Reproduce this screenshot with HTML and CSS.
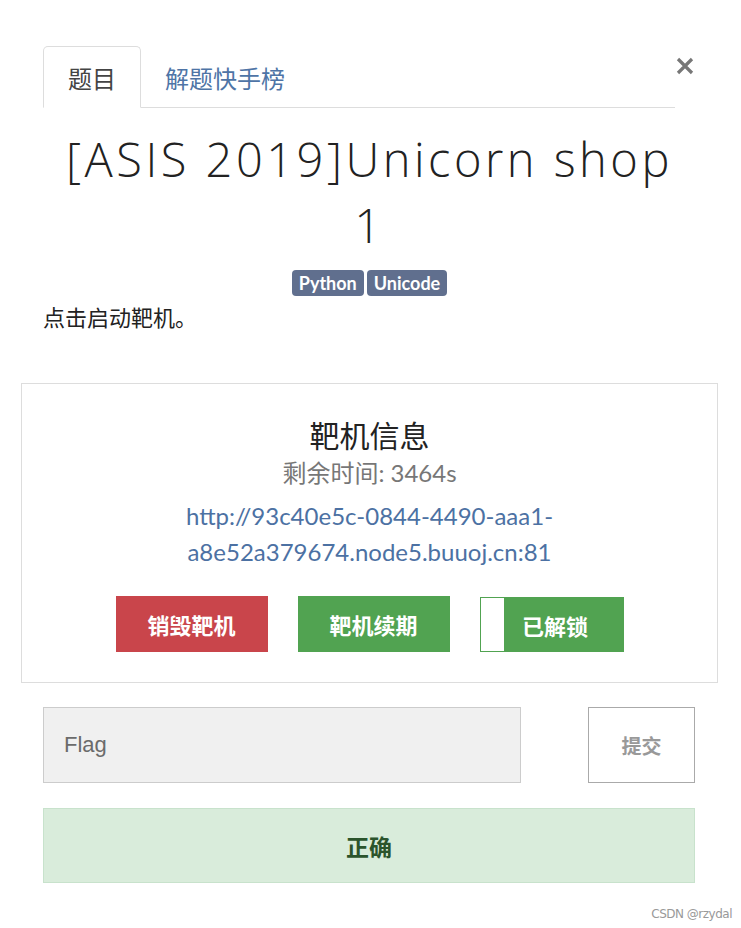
FILE: index.html
```html
<!DOCTYPE html>
<html lang="zh">
<head>
<meta charset="utf-8">
<title>[ASIS 2019]Unicorn shop 1</title>
<link rel="stylesheet" href="styles.css">
</head>
<body>
<div class="modal">
  <div class="head">
    <ul class="tabs">
      <li class="tab active">题目</li>
      <li class="tab link">解题快手榜</li>
    </ul>
    <button class="close" aria-label="close">
      <svg width="18" height="18" viewBox="0 0 18 18"><path d="M2 2 L16 16 M16 2 L2 16" stroke="#777" stroke-width="3.2" stroke-linecap="butt"/></svg>
    </button>
  </div>
  <h1 class="title">[ASIS 2019]Unicorn shop 1</h1>
  <div class="badges"><span class="badge">Python</span><span class="badge">Unicode</span></div>
  <p class="desc">点击启动靶机。</p>
  <div class="card">
    <h2 class="card-title">靶机信息</h2>
    <div class="remain">剩余时间: 3464s</div>
    <a class="url" href="#">http://93c40e5c-0844-4490-aaa1-<br>a8e52a379674.node5.buuoj.cn:81</a>
    <div class="actions">
      <button class="btn red">销毁靶机</button>
      <button class="btn green">靶机续期</button>
      <button class="btn green toggle"><span class="knob"></span><span class="tlabel">已解锁</span></button>
    </div>
  </div>
  <div class="flagrow">
    <input class="flag" type="text" placeholder="Flag">
    <button class="submit">提交</button>
  </div>
  <div class="ok">正确</div>
  <div class="mark">CSDN @rzydal</div>
</div>
</body>
</html>
```
FILE: styles.css
```css
* { box-sizing: border-box; }
html, body { margin: 0; padding: 0; background: #fff; }
body { font-family: Lato, "Noto Sans CJK SC", sans-serif; color: #333; width: 741px; height: 928px; overflow: hidden; }
.modal { padding: 46px 23px 0 21px; }
.head { display: flex; align-items: flex-start; margin: 0 0 0 22px; }
.tabs { list-style: none; margin: 0; padding: 0; display: flex; flex: 0 0 632px; border-bottom: 1px solid #ddd; height: 62px; }
.tab { font-size: 24px; height: 62px; display: flex; align-items: center; font-family: "Noto Sans CJK SC", sans-serif; }
.tab.active { width: 98px; padding-left: 24px; border: 1px solid #ddd; border-bottom-color: #fff; border-radius: 5px 5px 0 0; color: #444; }
.tab.link { padding-left: 24px; color: #4e74a6; }
.close { border: 0; background: none; padding: 0; margin: 11px 0 0 1px; width: 18px; height: 18px; cursor: pointer; }
.close svg { display: block; }
.title { font-family: "Open Sans", "Noto Sans CJK SC", sans-serif; font-weight: 300; font-size: 47px; line-height: 66px; text-align: center; margin: 18px 35px 0; color: #222; letter-spacing: 3.5px; }
.badges { display: flex; justify-content: center; gap: 3px; margin-top: 12px; }
.badge { background: #606f8e; color: #fff; font-weight: 700; font-size: 18px; height: 26px; line-height: 26px; padding: 0 7px; border-radius: 4px; }
.desc { margin: 4px 0 0 22px; font-size: 22px; line-height: 32px; font-family: "Noto Sans CJK SC", sans-serif; color: #222; }
.card { margin-top: 51px; border: 1px solid #ddd; padding: 30px 0 30px; text-align: center; }
.card-title { margin: 0; font-weight: 400; font-size: 30px; line-height: 40px; font-family: "Noto Sans CJK SC", sans-serif; color: #222; }
.remain { font-size: 24px; line-height: 36px; color: #777; margin-top: 1px; }
.url { display: block; color: #4c71a3; text-decoration: none; font-size: 24px; line-height: 36px; margin-top: 7px; }
.actions { display: flex; justify-content: center; gap: 30px; margin-top: 26px; }
.btn { border: 0; font-family: "Noto Sans CJK SC", sans-serif; font-weight: 700; font-size: 22px; color: #fff; width: 152px; height: 56px; padding: 0; }
.red { background: #c9454b; }
.green { background: #51a351; }
.toggle { width: 144px; display: flex; align-items: stretch; border: 1px solid #51a351; margin-top: 1px; height: 55px; }
.knob { width: 23px; background: #fff; }
.tlabel { flex: 1; display: flex; align-items: center; justify-content: center; padding-right: 16px; }
.flagrow { display: flex; justify-content: space-between; margin: 24px 23px 0 22px; }
.flag { width: 478px; height: 76px; background: #f0f0f0; border: 1px solid #ccc; font-family: "Liberation Sans", Arial, sans-serif; font-size: 22px; padding: 0 20px; color: #333; outline: none; }
.flag::placeholder { color: #6b6b6b; }
.submit { width: 107px; height: 76px; background: #fff; border: 1px solid #aaa; font-family: "Noto Sans CJK SC", sans-serif; font-weight: 700; font-size: 20px; color: #999; }
.ok { margin: 25px 23px 0 22px; height: 75px; background: #d9ecdb; border: 1px solid #c8e2cc; display: flex; align-items: center; justify-content: center; font-family: "Noto Sans CJK SC", sans-serif; font-weight: 700; font-size: 23px; color: #2b542c; }
.mark { text-align: right; font-size: 12px; color: #999; margin-top: 24px; margin-right: -14px; font-family: "DejaVu Sans", sans-serif; letter-spacing: -0.5px; }
```
